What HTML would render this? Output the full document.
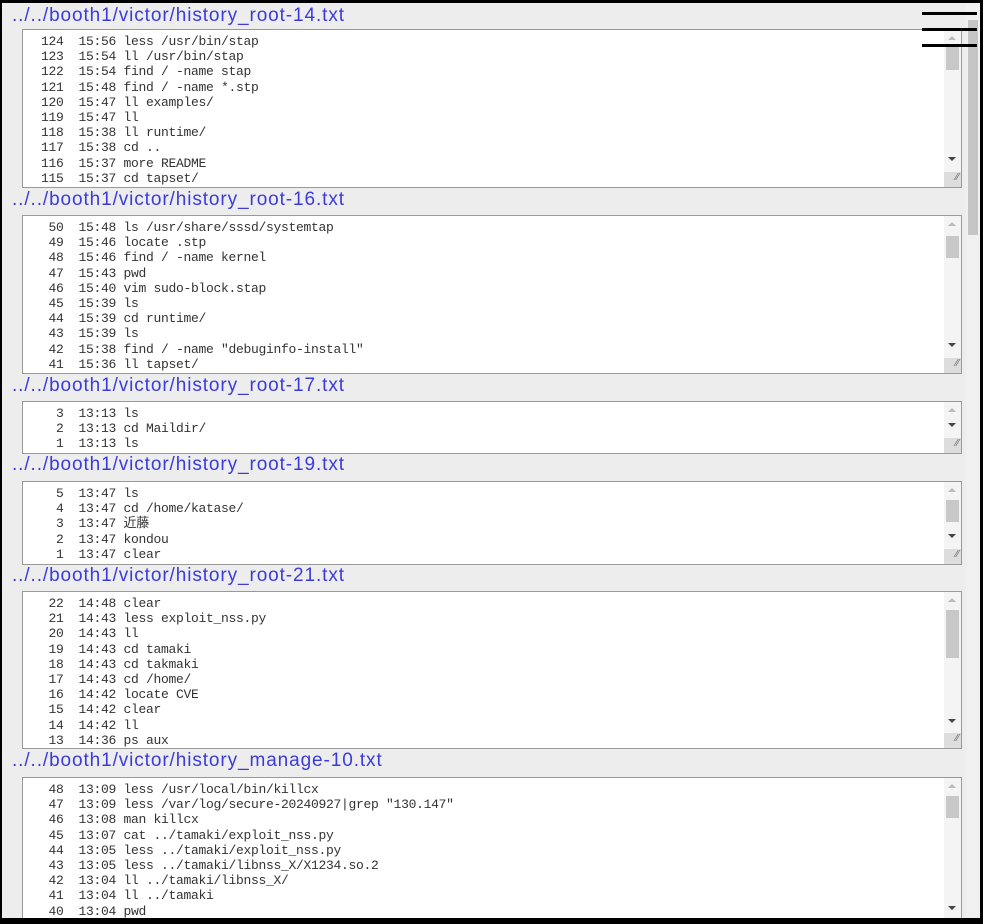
<!DOCTYPE html>
<html><head><meta charset="utf-8"><style>
*{margin:0;padding:0;box-sizing:border-box}
html,body{width:983px;height:924px;overflow:hidden;background:#000}
#frame{position:absolute;left:2px;top:3px;width:978px;height:915px;background:#ededed;overflow:hidden}
.t{position:absolute;left:10px;font:19px "Liberation Sans",sans-serif;color:#3b3bdc;white-space:nowrap;letter-spacing:0.9px;line-height:22px}
.b{position:absolute;left:20px;width:940px;background:#fff;border:1px solid #999;overflow:hidden}
.b pre{position:absolute;left:3px;top:4px;font:13px/15.2px "Liberation Mono","Noto Sans CJK JP",monospace;color:#333;letter-spacing:-0.3px}
.sb{position:absolute;right:0;top:0;bottom:0;width:17px;background:#f4f4f4}
.up,.dn{position:absolute;left:4px;width:0;height:0;border-left:4px solid transparent;border-right:4px solid transparent}
.up{top:6px;border-bottom:4px solid #bbb}
.dn{border-top:4px solid #444}
.th{position:absolute;left:2px;width:13px;background:#c8c8c8}
.rs{position:absolute;right:0;bottom:0;width:17px;height:15px;background:#ddd;font:10px sans-serif;color:#666;text-align:right;padding-right:2px}
#psb{position:absolute;left:964px;top:0;width:14px;height:915px;background:#f0f0f0}
#pth{position:absolute;left:966px;top:17px;width:10px;height:215px;background:#c5c5c5}
.hb{position:absolute;left:920px;width:55px;height:3px;background:#000}
</style></head><body><div id="frame">
<div id="psb"></div><div id="pth"></div>

<div class="t" style="top:2px">../../booth1/victor/history_root-14.txt</div>
<div class="b" style="top:26px;height:159px"><pre>  124  15:56 less /usr/bin/stap
  123  15:54 ll /usr/bin/stap
  122  15:54 find / -name stap
  121  15:48 find / -name *.stp
  120  15:47 ll examples/
  119  15:47 ll
  118  15:38 ll runtime/
  117  15:38 cd ..
  116  15:37 more README
  115  15:37 cd tapset/
  114  15:37 ll</pre><div class="sb"><div class="up"></div><div class="th" style="top:16px;height:24px"></div><div class="dn" style="top:127px"></div><div class="rs">⁄⁄</div></div></div>

<div class="t" style="top:186px">../../booth1/victor/history_root-16.txt</div>
<div class="b" style="top:212px;height:159px"><pre>   50  15:48 ls /usr/share/sssd/systemtap
   49  15:46 locate .stp
   48  15:46 find / -name kernel
   47  15:43 pwd
   46  15:40 vim sudo-block.stap
   45  15:39 ls
   44  15:39 cd runtime/
   43  15:39 ls
   42  15:38 find / -name "debuginfo-install"
   41  15:36 ll tapset/
   40  15:36 ll</pre><div class="sb"><div class="up"></div><div class="th" style="top:20px;height:22px"></div><div class="dn" style="top:127px"></div><div class="rs">⁄⁄</div></div></div>

<div class="t" style="top:372px">../../booth1/victor/history_root-17.txt</div>
<div class="b" style="top:398px;height:53px"><pre>    3  13:13 ls
    2  13:13 cd Maildir/
    1  13:13 ls</pre><div class="sb"><div class="up"></div><div class="dn" style="top:21px"></div><div class="rs">⁄⁄</div></div></div>

<div class="t" style="top:451px">../../booth1/victor/history_root-19.txt</div>
<div class="b" style="top:478px;height:84px"><pre>    5  13:47 ls
    4  13:47 cd /home/katase/
    3  13:47 近藤
    2  13:47 kondou
    1  13:47 clear</pre><div class="sb"><div class="up"></div><div class="th" style="top:18px;height:22px"></div><div class="dn" style="top:52px"></div><div class="rs">⁄⁄</div></div></div>

<div class="t" style="top:562px">../../booth1/victor/history_root-21.txt</div>
<div class="b" style="top:588px;height:158px"><pre>   22  14:48 clear
   21  14:43 less exploit_nss.py
   20  14:43 ll
   19  14:43 cd tamaki
   18  14:43 cd takmaki
   17  14:43 cd /home/
   16  14:42 locate CVE
   15  14:42 clear
   14  14:42 ll
   13  14:36 ps aux
   12  14:35 ll</pre><div class="sb"><div class="up"></div><div class="th" style="top:18px;height:48px"></div><div class="dn" style="top:127px"></div><div class="rs">⁄⁄</div></div></div>

<div class="t" style="top:747px">../../booth1/victor/history_manage-10.txt</div>
<div class="b" style="top:774px;height:160px"><pre>   48  13:09 less /usr/local/bin/killcx
   47  13:09 less /var/log/secure-20240927|grep "130.147"
   46  13:08 man killcx
   45  13:07 cat ../tamaki/exploit_nss.py
   44  13:05 less ../tamaki/exploit_nss.py
   43  13:05 less ../tamaki/libnss_X/X1234.so.2
   42  13:04 ll ../tamaki/libnss_X/
   41  13:04 ll ../tamaki
   40  13:04 pwd</pre><div class="sb"><div class="up"></div><div class="th" style="top:18px;height:22px"></div><div class="dn" style="top:128px"></div></div></div>

<div class="hb" style="top:9px"></div>
<div class="hb" style="top:25px"></div>
<div class="hb" style="top:41px"></div>
</div></body></html>
